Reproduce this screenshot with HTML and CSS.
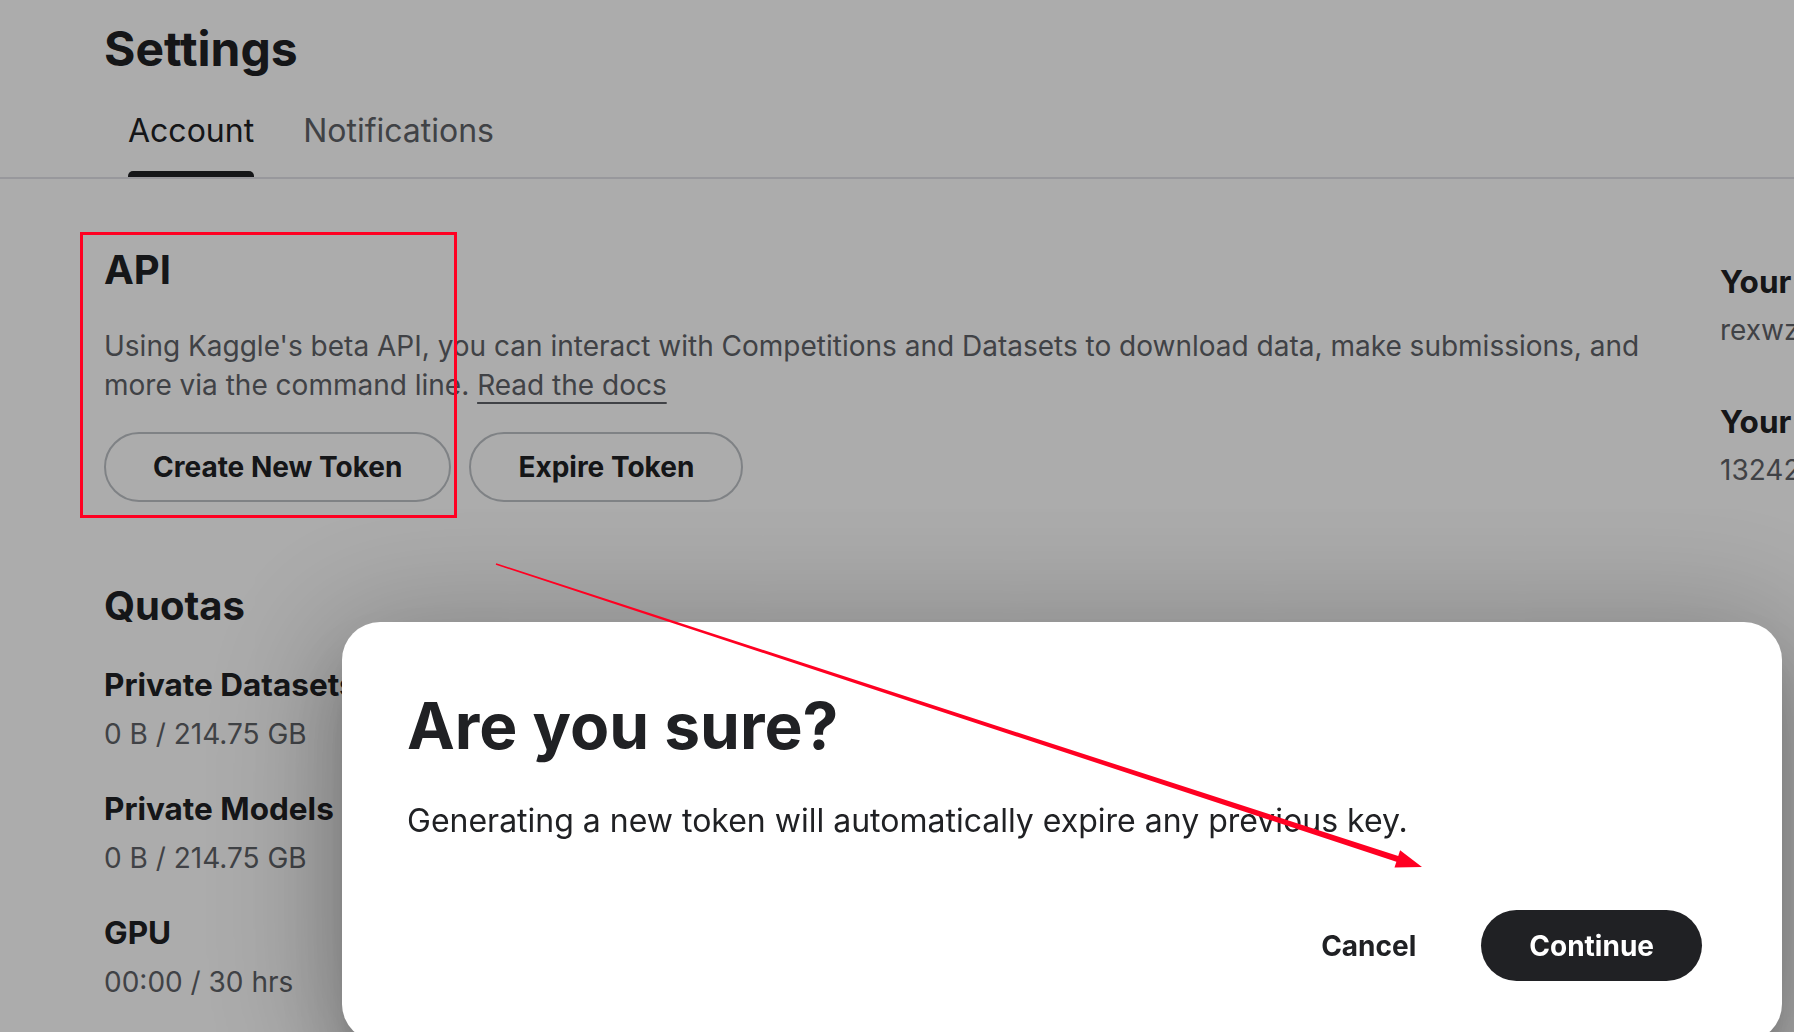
FILE: index.html
```html
<!DOCTYPE html>
<html lang="en">
<head>
<meta charset="utf-8">
<title>Settings</title>
<link rel="stylesheet" href="styles.css">
</head>
<body>
<div class="page">
  <header class="page-head"><h1 class="page-title">Settings</h1></header>
  <nav class="tabs">
    <a class="tab tab-active">Account</a>
    <a class="tab">Notifications</a>
  </nav>
  <main class="content">
    <div class="main-col">
      <section class="api">
        <h2 class="section-title">API</h2>
        <p class="desc">Using Kaggle's beta API, you can interact with Competitions and Datasets to download data, make submissions, and more via the command line. <a class="doc-link">Read the docs</a></p>
        <div class="btn-row">
          <button class="outline-btn">Create New Token</button>
          <button class="outline-btn">Expire Token</button>
        </div>
      </section>
      <section class="quotas">
        <h2 class="section-title">Quotas</h2>
        <div class="quota"><h3 class="item-title">Private Datasets</h3><p class="item-value">0 B / 214.75 GB</p></div>
        <div class="quota"><h3 class="item-title">Private Models</h3><p class="item-value">0 B / 214.75 GB</p></div>
        <div class="quota"><h3 class="item-title">GPU</h3><p class="item-value">00:00 / 30 hrs</p></div>
      </section>
    </div>
    <aside class="side-col">
      <div class="info"><h3 class="item-title">Your Username</h3><p class="item-value">rexwzh</p></div>
      <div class="info"><h3 class="item-title">Your User ID</h3><p class="item-value">13242587</p></div>
    </aside>
  </main>
</div>
<div class="scrim"></div>
<div class="dialog" role="dialog">
  <h2 class="dialog-title">Are you sure?</h2>
  <p class="dialog-body">Generating a new token will automatically expire any previous key.</p>
  <div class="dialog-actions">
    <button class="text-btn">Cancel</button>
    <button class="solid-btn">Continue</button>
  </div>
</div>
<div class="annot-box"></div>
<svg class="annot-arrow" width="1794" height="1032" viewBox="0 0 1794 1032">
  <polygon fill="#ff0022" points="496.23,563.29 1398.23,856.05 1400.1,850.35 1422,867 1394.5,867.45 1396.37,861.75 495.77,564.71"/>
</svg>
</body>
</html>
```

FILE: styles.css
```css
* { box-sizing: border-box; }
html, body {
  margin: 0;
  padding: 0;
  width: 1794px;
  height: 1032px;
  overflow: hidden;
  background: #ffffff;
  font-family: Inter, "Noto Sans", "Liberation Sans", sans-serif;
  color: #202124;
}
.page { width: 1794px; }
.page-head { padding: 20px 0 0 104px; }
.page-title {
  margin: 0;
  font-size: 48px;
  line-height: 58px;
  font-weight: 700;
  color: #202124;
}
.tabs {
  margin-top: 33px;
  display: flex;
  gap: 49px;
  padding-left: 128px;
  border-bottom: 2px solid #e2e1e8;
}
.tab {
  position: relative;
  font-size: 32px;
  line-height: 40px;
  padding-bottom: 26px;
  color: #5f6368;
}
.tab-active { color: #202124; }
.tab-active::after {
  content: "";
  position: absolute;
  left: 0;
  right: 0;
  bottom: 0;
  height: 6px;
  background: #202124;
  border-radius: 5px 5px 0 0;
}
.content {
  display: flex;
  padding-left: 104px;
  gap: 56px;
}
.main-col {
  width: 1560px;
  flex: none;
  padding-top: 67px;
}
.side-col {
  flex: none;
  padding-top: 83px;
  white-space: nowrap;
}
.section-title {
  margin: 0;
  font-size: 40px;
  line-height: 48px;
  font-weight: 700;
  color: #202124;
}
.desc {
  margin: 33px 0 0;
  font-size: 28px;
  line-height: 39px;
  color: #5f6368;
}
.doc-link {
  color: #5f6368;
  text-decoration: underline;
  text-decoration-thickness: 2px;
  text-underline-offset: 7px;
}
.btn-row {
  margin-top: 27px;
  display: flex;
  gap: 18px;
}
.outline-btn {
  height: 70px;
  padding: 0 47px;
  border: 2px solid #bdc1c6;
  border-radius: 35px;
  background: transparent;
  font-family: inherit;
  font-size: 28px;
  font-weight: 700;
  color: #202124;
  display: flex;
  align-items: center;
}
.quotas { margin-top: 80px; }
.quota { margin-top: 35px; }
.item-title {
  margin: 0;
  font-size: 31.5px;
  line-height: 40px;
  font-weight: 700;
  color: #202124;
}
.item-value {
  margin: 9px 0 0;
  font-size: 28px;
  line-height: 40px;
  color: #5f6368;
}
.info + .info { margin-top: 52px; }
.info .item-value { margin-top: 8px; }

.scrim {
  position: fixed;
  inset: 0;
  background: rgba(0, 0, 0, 0.325);
}
.dialog {
  position: fixed;
  left: 342px;
  top: 622px;
  width: 1440px;
  height: 420px;
  background: #ffffff;
  border-radius: 38px;
  padding: 64px 80px 0 65px;
  box-shadow: 0 20px 27px -13px rgba(0,0,0,0.2), 0 43px 68px 5px rgba(0,0,0,0.14), 0 16px 130px 24px rgba(0,0,0,0.22);
}
.dialog-title {
  margin: 0;
  font-size: 64px;
  line-height: 80px;
  font-weight: 700;
  color: #202124;
}
.dialog-body {
  margin: 35px 0 0;
  font-size: 32px;
  line-height: 40px;
  color: #202124;
}
.dialog-actions {
  margin-top: 69px;
  display: flex;
  justify-content: flex-end;
  gap: 17px;
}
.text-btn, .solid-btn {
  height: 71px;
  padding: 0 48px;
  border: none;
  border-radius: 36px;
  font-family: inherit;
  font-size: 28px;
  font-weight: 700;
  display: flex;
  align-items: center;
}
.text-btn { background: transparent; color: #202124; }
.solid-btn { background: #202124; color: #ffffff; }

.annot-box {
  position: fixed;
  left: 80px;
  top: 232px;
  width: 377px;
  height: 286px;
  border: 3px solid #ff0022;
}
.annot-arrow {
  position: fixed;
  left: 0;
  top: 0;
  pointer-events: none;
}
```
